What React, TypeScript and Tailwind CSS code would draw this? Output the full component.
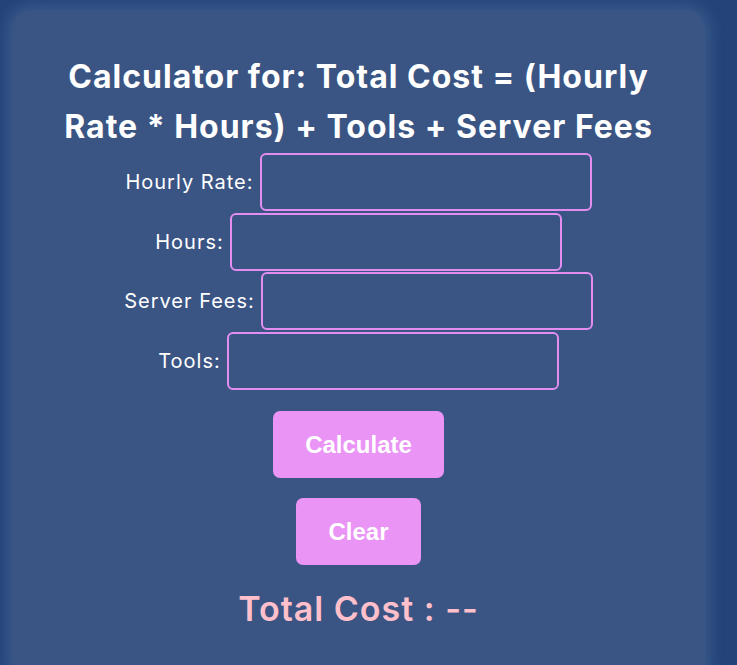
import React, { useState } from 'react';

const fields = [
  { key: 'rate', label: 'Hourly Rate:' },
  { key: 'hours', label: 'Hours:' },
  { key: 'fees', label: 'Server Fees:' },
  { key: 'tools', label: 'Tools:' },
] as const;

type FieldKey = (typeof fields)[number]['key'];

export default function App() {
  const [values, setValues] = useState<Record<FieldKey, string>>({ rate: '', hours: '', fees: '', tools: '' });
  const [total, setTotal] = useState<string>('--');

  const calculate = () => {
    const n = (k: FieldKey) => parseFloat(values[k]) || 0;
    setTotal((n('rate') * n('hours') + n('tools') + n('fees')).toFixed(2));
  };

  const clear = () => {
    setValues({ rate: '', hours: '', fees: '', tools: '' });
    setTotal('--');
  };

  return (
    <div className="min-h-screen bg-[#244478] pt-[10px] pl-[12px] pr-[32px] overflow-hidden font-['Inter',sans-serif]">
      <div className="rounded-[20px] bg-[#3a5584] shadow-[0_0_14px_6px_rgba(80,110,160,0.45)] pt-[42px] pb-[60px] flex flex-col items-center">
        <h2 className="text-white font-bold text-[32px] tracking-[1px] leading-[50px] text-center w-[640px]">
          Calculator for: Total Cost = (Hourly
          <br />
          Rate * Hours) + Tools + Server Fees
        </h2>

        <div className="flex flex-col items-center gap-[1.5px] mt-px">
          {fields.map((f) => (
            <div key={f.key} className="flex items-center gap-[6px]">
              <label className="text-white text-[20px] tracking-[1px]">{f.label}</label>
              <input
                type="text"
                value={values[f.key]}
                onChange={(e) => setValues({ ...values, [f.key]: e.target.value })}
                className="w-[332px] h-[58px] rounded-[6px] border-2 border-[#e28ef0] bg-transparent px-3 text-white outline-none"
              />
            </div>
          ))}
        </div>

        <button
          onClick={calculate}
          className="mt-[21px] rounded-[7px] bg-[#ea94f5] px-8 py-5 text-white text-2xl leading-[27px] font-bold font-['Liberation_Sans',sans-serif]"
        >
          Calculate
        </button>
        <button
          onClick={clear}
          className="mt-[20px] rounded-[7px] bg-[#ea94f5] px-8 py-5 text-white text-2xl leading-[27px] font-bold font-['Liberation_Sans',sans-serif]"
        >
          Clear
        </button>

        <p className="mt-[27px] text-[#ffc0cb] text-[34px] leading-none tracking-[1px] font-semibold">
          Total Cost : {total}
        </p>
      </div>
    </div>
  );
}
